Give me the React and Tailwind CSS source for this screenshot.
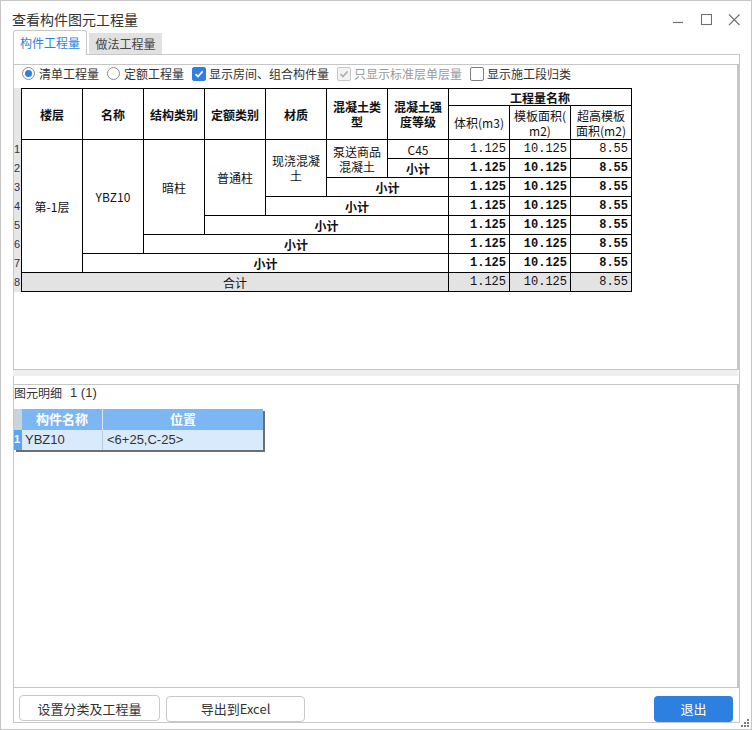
import React from "react";

const ui = "font-['Noto_Sans_CJK_SC','Liberation_Sans',sans-serif]";
const mono = "font-['Liberation_Mono','Noto_Sans_CJK_SC',monospace]";

// 表头与合并单元格
const cells = [
  { t: "楼层", c: "col-start-1 row-start-1 row-span-2 font-bold" },
  { t: "名称", c: "col-start-2 row-start-1 row-span-2 font-bold" },
  { t: "结构类别", c: "col-start-3 row-start-1 row-span-2 font-bold" },
  { t: "定额类别", c: "col-start-4 row-start-1 row-span-2 font-bold" },
  { t: "材质", c: "col-start-5 row-start-1 row-span-2 font-bold" },
  { t: ["混凝土类", "型"], c: "col-start-6 row-start-1 row-span-2 font-bold" },
  { t: ["混凝土强", "度等级"], c: "col-start-7 row-start-1 row-span-2 font-bold" },
  { t: "工程量名称", c: "col-start-8 col-span-3 row-start-1 font-bold" },
  { t: "体积(m3)", c: "col-start-8 row-start-2" },
  { t: ["模板面积(", "m2)"], c: "col-start-9 row-start-2" },
  { t: ["超高模板", "面积(m2)"], c: "col-start-10 row-start-2" },

  { t: "第-1层", c: "col-start-1 row-start-3 row-span-7" },
  { t: "YBZ10", c: "col-start-2 row-start-3 row-span-6" },
  { t: "暗柱", c: "col-start-3 row-start-3 row-span-5" },
  { t: "普通柱", c: "col-start-4 row-start-3 row-span-4" },
  { t: ["现浇混凝", "土"], c: "col-start-5 row-start-3 row-span-3" },
  { t: ["泵送商品", "混凝土"], c: "col-start-6 row-start-3 row-span-2" },
  { t: "C45", c: "col-start-7 row-start-3" },
  { t: "小计", c: "col-start-7 row-start-4 font-bold" },
  { t: "小计", c: "col-start-6 col-span-2 row-start-5 font-bold" },
  { t: "小计", c: "col-start-5 col-span-3 row-start-6 font-bold" },
  { t: "小计", c: "col-start-4 col-span-4 row-start-7 font-bold" },
  { t: "小计", c: "col-start-3 col-span-5 row-start-8 font-bold" },
  { t: "小计", c: "col-start-2 col-span-6 row-start-9 font-bold" },
  { t: "合计", c: "col-start-1 col-span-7 row-start-10 !bg-[#e3e3e3]" },
];

const numRows = [
  { r: "row-start-3", b: false },
  { r: "row-start-4", b: true },
  { r: "row-start-5", b: true },
  { r: "row-start-6", b: true },
  { r: "row-start-7", b: true },
  { r: "row-start-8", b: true },
  { r: "row-start-9", b: true },
  { r: "row-start-10", b: false, g: true },
];

const values = [
  { v: "1.125", c: "col-start-8" },
  { v: "10.125", c: "col-start-9" },
  { v: "8.55", c: "col-start-10" },
];

function Radio({ checked, label }) {
  return (
    <label className="flex items-center gap-[4px]">
      <span className="w-[13px] h-[13px] rounded-full border border-[#8c8c8c] bg-white flex items-center justify-center">
        {checked && <span className="w-[7px] h-[7px] rounded-full bg-[#2f7fe0]" />}
      </span>
      <span>{label}</span>
    </label>
  );
}

function Check({ checked, disabled, label }) {
  return (
    <label className={`flex items-center gap-[3px] ${disabled ? "text-[#9a9a9a]" : ""}`}>
      <span
        className={`w-[14px] h-[14px] rounded-[2px] border flex items-center justify-center ${
          checked && !disabled
            ? "bg-[#2f7fe0] border-[#2f7fe0]"
            : disabled
            ? "bg-[#f3f3f3] border-[#c6c6c6]"
            : "bg-white border-[#7e7e7e]"
        }`}
      >
        {checked && (
          <svg width="10" height="10" viewBox="0 0 10 10">
            <path
              d="M1.5 5.2 L4 7.6 L8.6 2.4"
              fill="none"
              stroke={disabled ? "#b0b0b0" : "#ffffff"}
              strokeWidth="1.6"
            />
          </svg>
        )}
      </span>
      <span>{label}</span>
    </label>
  );
}

function Btn({ children, w, primary }) {
  return (
    <button
      className={`h-[26px] ${w} rounded-[4px] text-[13px] ${
        primary ? "bg-[#2d7fe0] text-white" : "bg-white border border-[#c9c9c9] text-[#333]"
      }`}
    >
      {children}
    </button>
  );
}

export default function App() {
  return (
    <div className={`relative w-[752px] h-[730px] bg-white border border-[#c6c6c6] text-[#333] ${ui}`}>
      {/* 标题栏 */}
      <div className="h-[29px] flex justify-between pl-[11px] pr-[11px]">
        <div className="pt-[9px] text-[14px] leading-[18px]">查看构件图元工程量</div>
        <div className="flex gap-[16px] pt-[13px] text-[#6f6f6f]">
          <svg width="12" height="12" viewBox="0 0 12 12">
            <path d="M1 8.5 H11" stroke="currentColor" strokeWidth="1.2" />
          </svg>
          <svg width="12" height="12" viewBox="0 0 12 12">
            <rect x="1.5" y="0.5" width="10" height="10" fill="none" stroke="currentColor" strokeWidth="1.1" />
          </svg>
          <svg width="12" height="12" viewBox="0 0 12 12">
            <path d="M1 0.5 L11.5 11 M11.5 0.5 L1 11" stroke="currentColor" strokeWidth="1.1" />
          </svg>
        </div>
      </div>

      {/* 页签 */}
      <div className="h-[24px] flex items-end gap-[2px] pl-[12px] text-[12px]">
        <div className="relative z-10 h-[25px] -mb-px w-[74px] border border-b-0 border-[#c8c8c8] rounded-t-[3px] bg-white text-[#2f7fd8] flex items-center justify-center">
          构件工程量
        </div>
        <div className="h-[21px] w-[73px] bg-[#e1e1e1] text-[#444] flex items-center justify-center">做法工程量</div>
      </div>

      {/* 页签内容 */}
      <div className="ml-[12px] w-[727px] h-[669px] border border-[#c8c8c8] flex flex-col">
        {/* 上方工程量表 */}
        <div className="mt-[9px] -ml-px w-[726px] h-[306px] border border-r-2 border-[#c6c6c6] flex flex-col">
          <div className="h-[17px] flex items-center gap-[8px] pl-[8px] text-[12px] leading-[16px]">
            <Radio checked label="清单工程量" />
            <Radio label="定额工程量" />
            <Check checked label="显示房间、组合构件量" />
            <Check checked disabled label="只显示标准层单层量" />
            <Check label="显示施工段归类" />
          </div>

          <div className="mt-[6px] flex">
            <div className="w-[7px] flex flex-col bg-[#e6e6e6] text-[11px] leading-[12px] text-[#2c3550] font-['Liberation_Sans',sans-serif]">
              <div className="h-[51px]" />
              {[1, 2, 3, 4, 5, 6, 7, 8].map((n) => (
                <div key={n} className="h-[19px] pt-[4px]">
                  {n}
                </div>
              ))}
            </div>

            <div className="grid grid-cols-[repeat(10,60px)] grid-rows-[16px_33px_repeat(8,18px)] gap-px p-px bg-black text-[12px] leading-[15px] text-[#111]">
              {cells.map((cell, i) => (
                <div key={i} className={`bg-white flex flex-col items-center justify-center text-center ${cell.c}`}>
                  {Array.isArray(cell.t) ? cell.t.map((line, j) => <span key={j}>{line}</span>) : cell.t}
                </div>
              ))}
              {numRows.map((row) =>
                values.map((val) => (
                  <div
                    key={row.r + val.c}
                    className={`flex items-center justify-end pr-[3px] text-[12px] ${mono} ${row.r} ${val.c} ${
                      row.g ? "bg-[#e3e3e3]" : "bg-white"
                    } ${row.b ? "font-bold" : ""}`}
                  >
                    {val.v}
                  </div>
                ))
              )}
            </div>
          </div>
        </div>

        {/* 分隔条 */}
        <div className="-ml-px w-[725px] h-[6px] bg-[#eeeeee]" />

        {/* 图元明细 */}
        <div className="mt-[8px] -ml-px w-[726px] h-[305px] border border-r-2 border-[#c6c6c6] flex flex-col">
          <div className="h-[17px] flex items-center gap-[8px] text-[12px] leading-[16px]">
            <span>图元明细</span>
            <span className="font-['Liberation_Sans',sans-serif] text-[13px]">1 (1)</span>
          </div>
          <div className="mt-[7px] w-[249px] shadow-[2px_2px_0_#6e6e6e] text-[13px]">
            <div className="h-[21px] flex">
              <div className="w-[8px] bg-[#c9d3de]" />
              <div className="w-[80px] bg-[#7cb6f3] text-white font-bold flex items-center justify-center">构件名称</div>
              <div className="flex-1 border-l border-[#d6e7fa] bg-[#7cb6f3] text-white font-bold flex items-center justify-center">
                位置
              </div>
            </div>
            <div className="h-[20px] flex bg-[#d9eafc] font-['Liberation_Sans',sans-serif]">
              <div className="w-[8px] bg-[#5fa3ee] text-white text-[11px] font-bold flex items-center">1</div>
              <div className="w-[80px] pl-[3px] flex items-center">YBZ10</div>
              <div className="flex-1 border-l border-[#b9cde2] pl-[4px] flex items-center">&lt;6+25,C-25&gt;</div>
            </div>
          </div>
        </div>

        {/* 底部按钮 */}
        <div className="mt-[7px] flex pl-[5px] pr-[6px]">
          <Btn w="w-[141px]">设置分类及工程量</Btn>
          <div className="ml-[6px]">
            <Btn w="w-[139px]">导出到Excel</Btn>
          </div>
          <div className="ml-auto">
            <Btn w="w-[79px]" primary>
              退出
            </Btn>
          </div>
        </div>
      </div>

      {/* 右下角拖动点 */}
      <svg className="absolute right-[1px] bottom-[1px]" width="10" height="10" viewBox="0 0 10 10">
        <g fill="#7a7a7a">
          <rect x="7" y="1" width="2" height="2" />
          <rect x="4" y="4" width="2" height="2" />
          <rect x="7" y="4" width="2" height="2" />
          <rect x="1" y="7" width="2" height="2" />
          <rect x="4" y="7" width="2" height="2" />
          <rect x="7" y="7" width="2" height="2" />
        </g>
      </svg>
    </div>
  );
}
